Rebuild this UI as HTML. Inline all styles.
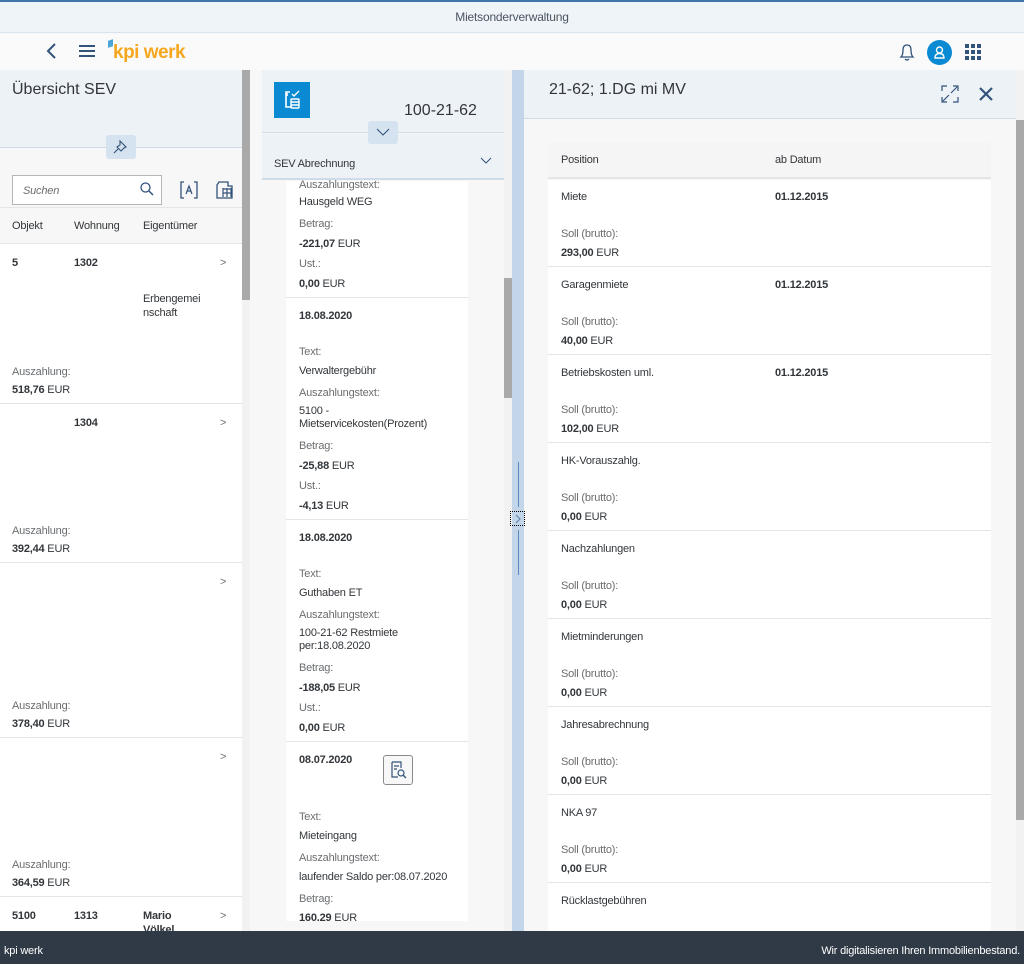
<!DOCTYPE html>
<html><head><meta charset="utf-8"><style>
*{margin:0;padding:0;box-sizing:border-box}
body{width:1024px;height:964px;overflow:hidden;position:relative;background:#f7f7f7;font-family:"Liberation Sans",sans-serif;color:#32363a}
.a{position:absolute}
.t{position:absolute;font-size:11px;line-height:14px;white-space:nowrap;letter-spacing:-0.2px;margin-top:1px}
.l{color:#6a6d70}
.b{font-weight:bold}
.hr{position:absolute;height:1px;background:#e5e5e5}
</style></head><body>
<!-- shell header -->
<div class="a" style="left:0;top:0;width:1024px;height:2px;background:#3f76ac"></div>
<div class="a" style="left:0;top:2px;width:1024px;height:31px;background:#eff4f9;border-bottom:1px solid #d9e3ee"></div>
<div class="t" style="left:0;width:1024px;text-align:center;top:9px;font-size:12px;color:#4a5560">Mietsonderverwaltung</div>
<div class="a" style="left:0;top:34px;width:1024px;height:36px;background:#fafafa"></div>
<svg class="a" style="left:44px;top:42px" width="16" height="18"><path d="M11 2 L4 9 L11 16" stroke="#32537a" stroke-width="2" fill="none"/></svg>
<svg class="a" style="left:78px;top:44px" width="18" height="14"><path d="M1 2H17M1 7H17M1 12H17" stroke="#32537a" stroke-width="2"/></svg>
<div class="a" style="left:108px;top:40px;width:5px;height:7px;background:#4aa5d8;transform:skewY(-20deg)"></div>
<div class="t" style="left:113px;top:40px;font-size:19px;line-height:24px;font-weight:bold;color:#f4a71f;letter-spacing:-0.5px">kpi werk</div>
<svg class="a" style="left:898px;top:42px" width="18" height="20"><path d="M3 15 Q5 13 5 8 Q5 3 9 3 Q13 3 13 8 Q13 13 15 15 Z M7 17 Q9 19 11 17" stroke="#32537a" stroke-width="1.3" fill="none"/></svg>
<div class="a" style="left:927px;top:40px;width:25px;height:25px;border-radius:50%;background:#0a8ad2"></div>
<svg class="a" style="left:927px;top:40px" width="25" height="25"><circle cx="12.5" cy="10" r="3" stroke="#fff" stroke-width="1.4" fill="none"/><path d="M8 18 Q8 13.5 12.5 13.5 Q17 13.5 17 18 Z" stroke="#fff" stroke-width="1.4" fill="none"/></svg>
<svg class="a" style="left:965px;top:44px" width="16" height="16" fill="#32537a"><rect x="0" y="0" width="4" height="4"/><rect x="6" y="0" width="4" height="4"/><rect x="12" y="0" width="4" height="4"/><rect x="0" y="6" width="4" height="4"/><rect x="6" y="6" width="4" height="4"/><rect x="12" y="6" width="4" height="4"/><rect x="0" y="12" width="4" height="4"/><rect x="6" y="12" width="4" height="4"/><rect x="12" y="12" width="4" height="4"/></svg>

<!-- left column -->
<div class="a" style="left:0;top:70px;width:242px;height:78px;background:#edf2f7;border-bottom:1px solid #cfdbe7"></div>
<div class="t" style="left:12px;top:79px;font-size:16px;line-height:20px;letter-spacing:0">Übersicht SEV</div>
<div class="a" style="left:0;top:149px;width:242px;height:59px;background:#f7f7f7;border-bottom:1px solid #e5e5e5"></div>
<div class="a" style="left:106px;top:135px;width:30px;height:24px;background:#d5e2ef;border-radius:3px"></div>
<svg class="a" style="left:112px;top:138px" width="18" height="18"><path d="M8 3 L14 9 L12 10 L9 13 L5 9 L8 7 Z M6 11 L2 15" stroke="#32537a" stroke-width="1.1" fill="none"/></svg>
<div class="a" style="left:12px;top:175px;width:150px;height:30px;background:#fff;border:1px solid #b5b5b5"></div>
<div class="t l" style="left:23px;top:183px;font-style:italic">Suchen</div>
<svg class="a" style="left:139px;top:181px" width="16" height="16"><circle cx="6.5" cy="6.5" r="4.5" stroke="#32537a" stroke-width="1.3" fill="none"/><path d="M10 10 L14 14" stroke="#32537a" stroke-width="1.5"/></svg>
<svg class="a" style="left:179px;top:180px" width="20" height="20"><path d="M5 2H2V18H5M15 2H18V18H15" stroke="#32537a" stroke-width="1.3" fill="none"/><path d="M7 14 L10 6 L13 14 M8 11H12" stroke="#32537a" stroke-width="1.2" fill="none"/></svg>
<svg class="a" style="left:214px;top:180px" width="20" height="20"><path d="M5 2H14V6H18V18H3V5Z" stroke="#32537a" stroke-width="1.3" fill="none"/><path d="M9 9H18M9 13H18M9 17V8M13 17V8M17 17V8" stroke="#32537a" stroke-width="1.2"/></svg>
<div class="a" style="left:0;top:208px;width:242px;height:723px;background:#fff"></div>
<div class="a" style="left:0;top:208px;width:242px;height:36px;background:#f7f7f7;border-bottom:1px solid #e5e5e5"></div>
<div class="t" style="left:12px;top:218px">Objekt</div>
<div class="t" style="left:74px;top:218px">Wohnung</div>
<div class="t" style="left:143px;top:218px">Eigentümer</div>
<div class="t b" style="left:12px;top:255px">5</div><div class="t b" style="left:74px;top:255px">1302</div><div class="t l" style="left:220px;top:255px">&gt;</div>
<div class="t" style="left:143px;top:291px">Erbengemei</div><div class="t" style="left:143px;top:305px">nschaft</div>
<div class="t l" style="left:12px;top:364px">Auszahlung:</div><div class="t" style="left:12px;top:382px"><b>518,76</b> EUR</div>
<div class="hr" style="left:0;top:403px;width:242px"></div>
<div class="t b" style="left:74px;top:415px">1304</div><div class="t l" style="left:220px;top:415px">&gt;</div>
<div class="t l" style="left:12px;top:523px">Auszahlung:</div><div class="t" style="left:12px;top:541px"><b>392,44</b> EUR</div>
<div class="hr" style="left:0;top:562px;width:242px"></div>
<div class="t l" style="left:220px;top:574px">&gt;</div>
<div class="t l" style="left:12px;top:698px">Auszahlung:</div><div class="t" style="left:12px;top:716px"><b>378,40</b> EUR</div>
<div class="hr" style="left:0;top:737px;width:242px"></div>
<div class="t l" style="left:220px;top:749px">&gt;</div>
<div class="t l" style="left:12px;top:857px">Auszahlung:</div><div class="t" style="left:12px;top:875px"><b>364,59</b> EUR</div>
<div class="hr" style="left:0;top:896px;width:242px"></div>
<div class="t b" style="left:12px;top:908px">5100</div><div class="t b" style="left:74px;top:908px">1313</div><div class="t b" style="left:143px;top:908px">Mario</div><div class="t b" style="left:143px;top:922px">Völkel</div><div class="t l" style="left:220px;top:908px">&gt;</div>
<div class="a" style="left:242px;top:70px;width:8px;height:861px;background:#f2f2f2"></div>
<div class="a" style="left:242px;top:70px;width:8px;height:230px;background:#a9a9a9"></div>

<!-- middle column -->
<div class="a" style="left:262px;top:70px;width:242px;height:63px;background:#edf2f7;border-bottom:1px solid #cfdbe7"></div>
<div class="a" style="left:274px;top:82px;width:36px;height:36px;background:#0a8ad2"></div>
<svg class="a" style="left:274px;top:82px" width="36" height="36"><path d="M16 10H12V25H18M13 14V11" stroke="#fff" stroke-width="1.6" fill="none"/><rect x="17" y="17" width="8" height="9" rx="1" stroke="#fff" stroke-width="1.4" fill="none"/><path d="M17 20H25M17 23H25M18 12 L20 14 L25 9" stroke="#fff" stroke-width="1.4" fill="none"/></svg>
<div class="t" style="left:404px;top:100px;font-size:16px;line-height:20px;letter-spacing:0">100-21-62</div>
<div class="a" style="left:262px;top:134px;width:242px;height:46px;background:#edf2f7;border-bottom:2px solid #cfdbe7"></div>
<div class="a" style="left:368px;top:121px;width:30px;height:23px;background:#d5e2ef;border-radius:3px"></div>
<svg class="a" style="left:376px;top:127px" width="14" height="10"><path d="M1 2 L7 8 L13 2" stroke="#32537a" stroke-width="1.1" fill="none"/></svg>
<div class="t" style="left:274px;top:156px">SEV Abrechnung</div>
<svg class="a" style="left:480px;top:157px" width="12" height="8"><path d="M1 1 L6 6 L11 1" stroke="#32537a" stroke-width="1" fill="none"/></svg>
<div class="a" style="left:286px;top:181px;width:182px;height:740px;background:#fff"></div>
<div class="t l" style="left:299px;top:177px">Auszahlungstext:</div>
<div class="t" style="left:299px;top:194px">Hausgeld WEG</div>
<div class="t l" style="left:299px;top:216px">Betrag:</div>
<div class="t" style="left:299px;top:236px"><b>-221,07</b> EUR</div>
<div class="t l" style="left:299px;top:256px">Ust.:</div>
<div class="t" style="left:299px;top:276px"><b>0,00</b> EUR</div>
<div class="hr" style="left:286px;top:297px;width:182px"></div>
<div class="t b" style="left:299px;top:308px">18.08.2020</div>
<div class="t l" style="left:299px;top:344px">Text:</div>
<div class="t" style="left:299px;top:363px">Verwaltergebühr</div>
<div class="t l" style="left:299px;top:385px">Auszahlungstext:</div>
<div class="t" style="left:299px;top:403px">5100 -</div><div class="t" style="left:299px;top:416px">Mietservicekosten(Prozent)</div>
<div class="t l" style="left:299px;top:438px">Betrag:</div>
<div class="t" style="left:299px;top:458px"><b>-25,88</b> EUR</div>
<div class="t l" style="left:299px;top:478px">Ust.:</div>
<div class="t" style="left:299px;top:498px"><b>-4,13</b> EUR</div>
<div class="hr" style="left:286px;top:519px;width:182px"></div>
<div class="t b" style="left:299px;top:530px">18.08.2020</div>
<div class="t l" style="left:299px;top:566px">Text:</div>
<div class="t" style="left:299px;top:585px">Guthaben ET</div>
<div class="t l" style="left:299px;top:607px">Auszahlungstext:</div>
<div class="t" style="left:299px;top:625px">100-21-62 Restmiete</div><div class="t" style="left:299px;top:638px">per:18.08.2020</div>
<div class="t l" style="left:299px;top:660px">Betrag:</div>
<div class="t" style="left:299px;top:680px"><b>-188,05</b> EUR</div>
<div class="t l" style="left:299px;top:700px">Ust.:</div>
<div class="t" style="left:299px;top:720px"><b>0,00</b> EUR</div>
<div class="hr" style="left:286px;top:741px;width:182px"></div>
<div class="t b" style="left:299px;top:752px">08.07.2020</div>
<div class="a" style="left:383px;top:755px;width:30px;height:30px;border:1px solid #8a8a8a;border-radius:3px;background:#f7f7f7"></div>
<svg class="a" style="left:388px;top:760px" width="20" height="20"><path d="M4 2H13V8M4 2V17H10M6 6H11M6 9H9" stroke="#32537a" stroke-width="1.2" fill="none"/><circle cx="13" cy="13" r="3" stroke="#32537a" stroke-width="1.2" fill="none"/><path d="M15 15 L18 18" stroke="#32537a" stroke-width="1.3"/></svg>
<div class="t l" style="left:299px;top:809px">Text:</div>
<div class="t" style="left:299px;top:828px">Mieteingang</div>
<div class="t l" style="left:299px;top:850px">Auszahlungstext:</div>
<div class="t" style="left:299px;top:869px">laufender Saldo per:08.07.2020</div>
<div class="t l" style="left:299px;top:891px">Betrag:</div>
<div class="t" style="left:299px;top:910px"><b>160.29</b> EUR</div>
<div class="a" style="left:262px;top:921px;width:242px;height:10px;background:#f7f7f7"></div>
<div class="a" style="left:504px;top:70px;width:8px;height:861px;background:#f2f2f2"></div>
<div class="a" style="left:504px;top:278px;width:8px;height:120px;background:#a9a9a9"></div>

<!-- divider -->
<div class="a" style="left:512px;top:70px;width:12px;height:861px;background:#c3d5e8"></div>
<div class="a" style="left:518px;top:462px;width:1px;height:45px;background:#5b8bc0"></div>
<div class="a" style="left:518px;top:530px;width:1px;height:45px;background:#5b8bc0"></div>
<div class="a" style="left:510px;top:511px;width:15px;height:15px;border:1px dotted #000"></div>
<svg class="a" style="left:513px;top:513px" width="10" height="12"><path d="M3 2 L7 6 L3 10" stroke="#5b7ea8" stroke-width="1" fill="none"/></svg>

<!-- right column -->
<div class="a" style="left:524px;top:70px;width:492px;height:49px;background:#edf2f7;border-bottom:1px solid #cfdbe7"></div>
<div class="t" style="left:549px;top:79px;font-size:16px;line-height:20px;letter-spacing:0">21-62; 1.DG mi MV</div>
<svg class="a" style="left:940px;top:84px" width="20" height="20"><path d="M2 7V2H7M13 2H18V7M18 13V18H13M7 18H2V13M11 9L17 3M9 11L3 17" stroke="#32537a" stroke-width="1.2" fill="none"/></svg>
<svg class="a" style="left:978px;top:86px" width="16" height="16"><path d="M2 2L14 14M14 2L2 14" stroke="#32537a" stroke-width="2.2"/></svg>
<div class="a" style="left:548px;top:142px;width:443px;height:37px;background:#f5f5f5;border-bottom:2px solid #e5e5e5"></div>
<div class="t" style="left:561px;top:152px">Position</div>
<div class="t" style="left:775px;top:152px">ab Datum</div>
<div class="a" style="left:548px;top:180px;width:443px;height:751px;background:#fff"></div>
<div class="t" style="left:561px;top:189px">Miete</div><div class="t b" style="left:775px;top:189px">01.12.2015</div>
<div class="t l" style="left:561px;top:226px">Soll (brutto):</div><div class="t" style="left:561px;top:245px"><b>293,00</b> EUR</div>
<div class="hr" style="left:548px;top:266px;width:443px"></div>
<div class="t" style="left:561px;top:277px">Garagenmiete</div><div class="t b" style="left:775px;top:277px">01.12.2015</div>
<div class="t l" style="left:561px;top:314px">Soll (brutto):</div><div class="t" style="left:561px;top:333px"><b>40,00</b> EUR</div>
<div class="hr" style="left:548px;top:354px;width:443px"></div>
<div class="t" style="left:561px;top:365px">Betriebskosten uml.</div><div class="t b" style="left:775px;top:365px">01.12.2015</div>
<div class="t l" style="left:561px;top:402px">Soll (brutto):</div><div class="t" style="left:561px;top:421px"><b>102,00</b> EUR</div>
<div class="hr" style="left:548px;top:442px;width:443px"></div>
<div class="t" style="left:561px;top:453px">HK-Vorauszahlg.</div>
<div class="t l" style="left:561px;top:490px">Soll (brutto):</div><div class="t" style="left:561px;top:509px"><b>0,00</b> EUR</div>
<div class="hr" style="left:548px;top:530px;width:443px"></div>
<div class="t" style="left:561px;top:541px">Nachzahlungen</div>
<div class="t l" style="left:561px;top:578px">Soll (brutto):</div><div class="t" style="left:561px;top:597px"><b>0,00</b> EUR</div>
<div class="hr" style="left:548px;top:618px;width:443px"></div>
<div class="t" style="left:561px;top:629px">Mietminderungen</div>
<div class="t l" style="left:561px;top:666px">Soll (brutto):</div><div class="t" style="left:561px;top:685px"><b>0,00</b> EUR</div>
<div class="hr" style="left:548px;top:706px;width:443px"></div>
<div class="t" style="left:561px;top:717px">Jahresabrechnung</div>
<div class="t l" style="left:561px;top:754px">Soll (brutto):</div><div class="t" style="left:561px;top:773px"><b>0,00</b> EUR</div>
<div class="hr" style="left:548px;top:794px;width:443px"></div>
<div class="t" style="left:561px;top:805px">NKA 97</div>
<div class="t l" style="left:561px;top:842px">Soll (brutto):</div><div class="t" style="left:561px;top:861px"><b>0,00</b> EUR</div>
<div class="hr" style="left:548px;top:882px;width:443px"></div>
<div class="t" style="left:561px;top:893px">Rücklastgebühren</div>
<div class="a" style="left:1016px;top:70px;width:8px;height:861px;background:#f2f2f2"></div>
<div class="a" style="left:1016px;top:120px;width:8px;height:700px;background:#a9a9a9"></div>

<!-- footer -->
<div class="a" style="left:0;top:931px;width:1024px;height:33px;background:#2f3a46"></div>
<div class="t" style="left:4px;top:943px;color:#fff">kpi werk</div>
<div class="t" style="right:4px;top:943px;color:#fff">Wir digitalisieren Ihren Immobilienbestand.</div>
</body></html>
